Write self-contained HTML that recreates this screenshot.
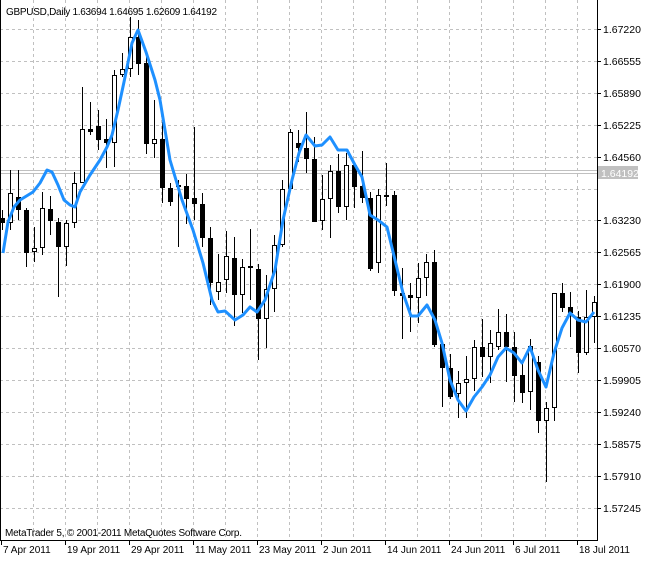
<!DOCTYPE html>
<html><head><meta charset="utf-8"><style>
html,body{margin:0;padding:0;background:#fff;width:650px;height:561px;overflow:hidden}
svg{display:block;font-family:"Liberation Sans",sans-serif;font-size:10.5px}
.s{font-size:10px}
</style></head><body>
<svg width="650" height="561" viewBox="0 0 650 561" xmlns="http://www.w3.org/2000/svg">
<rect width="650" height="561" fill="#fff"/>
<g stroke="#c0c0c0" stroke-width="1" stroke-dasharray="3,3" fill="none">
<path d="M33.5 0V540M65.5 0V540M97.5 0V540M129.5 0V540M161.5 0V540M193.5 0V540M225.5 0V540M257.5 0V540M289.5 0V540M321.5 0V540M353.5 0V540M385.5 0V540M417.5 0V540M449.5 0V540M481.5 0V540M513.5 0V540M545.5 0V540M577.5 0V540"/>
<path d="M0 29.5H597M0 61.5H597M0 93.5H597M0 125.5H597M0 157.5H597M0 189.5H597M0 220.5H597M0 252.5H597M0 284.5H597M0 316.5H597M0 348.5H597M0 380.5H597M0 412.5H597M0 444.5H597M0 476.5H597M0 508.5H597"/>
</g>
<path d="M0 170.5H597M0 173.5H597" stroke="#c0c0c0" stroke-width="1"/>
<path stroke="#000" stroke-width="1" fill="none" d="M2.5 210V230M10.5 170V230M18.5 170V220M26.5 208V267M34.5 227V262M42.5 192V255M50.5 196V235M58.5 218V297M66.5 220V266M74.5 172V228M82.5 87V183M90.5 102V135M98.5 110V150M106.5 119V168M114.5 70V167M122.5 53V77M130.5 17V77M138.5 20V75M146.5 57V154M154.5 100V158M162.5 122V203M170.5 183V206M178.5 180V247M186.5 174V224M194.5 127V220M202.5 193V247M210.5 227V305M218.5 254V300M226.5 231V293M234.5 237V326M242.5 259V313M250.5 229V300M258.5 264V360M266.5 275V348M274.5 235V312M282.5 180V247M290.5 129V190M298.5 130V162M306.5 112V173M314.5 137V222M322.5 175V230M330.5 165V238M338.5 154V213M346.5 153V220M354.5 165V208M362.5 151V203M370.5 192V271M378.5 189V273M386.5 163V206M394.5 191V296M402.5 268V339M410.5 283V332M418.5 263V323M426.5 254V296M434.5 250V347M442.5 344V407M450.5 354V399M458.5 371V418M466.5 356V418M474.5 340V391M482.5 319V377M490.5 330V383M498.5 309V350M506.5 314V382M514.5 332V402M522.5 363V403M530.5 339V410M538.5 356V433M546.5 402V482M554.5 293V421M562.5 283V312M570.5 292V337M578.5 311V373M586.5 290V355M594.5 296V343"/>
<path fill="#000" d="M0 218h5v5h-5zM16 197h5v13h-5zM24 210h5v43h-5zM48 209h5v12h-5zM56 222h5v25h-5zM88 129h5v3h-5zM96 126h5v14h-5zM104 139h5v4h-5zM136 37h5v27h-5zM144 63h5v81h-5zM160 139h5v49h-5zM168 188h5v14h-5zM184 186h5v13h-5zM192 198h5v6h-5zM200 204h5v34h-5zM208 238h5v45h-5zM232 258h5v37h-5zM248 266h5v2h-5zM256 269h5v50h-5zM296 143h5v5h-5zM304 148h5v11h-5zM312 159h5v63h-5zM336 171h5v36h-5zM352 165h5v22h-5zM360 186h5v12h-5zM368 198h5v71h-5zM384 195h5v2h-5zM392 195h5v96h-5zM400 293h5v3h-5zM408 295h5v3h-5zM432 262h5v83h-5zM440 344h5v24h-5zM448 368h5v29h-5zM480 347h5v10h-5zM504 332h5v15h-5zM512 347h5v29h-5zM520 375h5v18h-5zM536 362h5v59h-5zM560 293h5v15h-5zM568 307h5v6h-5zM576 317h5v36h-5z"/>
<path fill="#fff" stroke="#000" stroke-width="1" d="M8.5 193.5h4v29h-4zM32.5 248.5h4v3h-4zM40.5 208.5h4v39h-4zM64.5 223.5h4v23h-4zM72.5 183.5h4v39h-4zM80.5 129.5h4v53h-4zM112.5 75.5h4v67h-4zM120.5 69.5h4v5h-4zM128.5 37.5h4v31h-4zM152.5 139.5h4v4h-4zM176.5 185.5h4v1h-4zM216.5 282.5h4v9h-4zM224.5 256.5h4v23h-4zM240.5 267.5h4v27h-4zM264.5 289.5h4v29h-4zM272.5 245.5h4v43h-4zM280.5 189.5h4v55h-4zM288.5 132.5h4v56h-4zM320.5 199.5h4v21h-4zM328.5 171.5h4v27h-4zM344.5 165.5h4v41h-4zM376.5 195.5h4v67h-4zM416.5 278.5h4v19h-4zM424.5 262.5h4v15h-4zM456.5 383.5h4v10h-4zM464.5 379.5h4v3h-4zM472.5 347.5h4v31h-4zM488.5 343.5h4v13h-4zM496.5 332.5h4v14h-4zM528.5 346.5h4v45h-4zM544.5 408.5h4v12h-4zM552.5 293.5h4v114h-4zM584.5 317.5h4v35h-4zM592.5 302.5h4v14h-4z"/>
<polyline fill="none" stroke="#1e90ff" stroke-width="3" stroke-linejoin="round" points="3,253 8,222 14,207 20,200 33,192 40,183 47,170 52,172 58,185 64,200 70,205 75,207 80,192 90,175 100,160 107,147 112,135 118,110 124,82 132,43 138,30 146,52 155,80 160,100 170,160 182,200 193,230 203,263 212,300 218,312 225,311 235,320 243,315 250,307 257,312 265,300 275,270 283,220 292,180 299,153 306,135 315,146 322,145 330,137 338,150 347,150 355,165 362,177 370,215 378,220 387,227 395,260 403,293 411,316 418,316 427,305 435,320 442,343 450,380 458,400 466,411 474,397 482,387 490,375 498,357 506,348 514,353 522,363 530,347 538,370 546,387 554,353 562,328 570,313 578,320 586,322 594,312"/>
<path d="M0.5 0V540.5H597.5V0" stroke="#000" stroke-width="1" fill="none"/>
<path stroke="#000" stroke-width="1" d="M597 29.5h4M597 61.5h4M597 93.5h4M597 125.5h4M597 157.5h4M597 220.5h4M597 252.5h4M597 284.5h4M597 316.5h4M597 348.5h4M597 380.5h4M597 412.5h4M597 444.5h4M597 476.5h4M597 508.5h4M1.5 540v5M65.5 540v5M129.5 540v5M193.5 540v5M257.5 540v5M321.5 540v5M385.5 540v5M449.5 540v5M513.5 540v5M577.5 540v5"/>
<g fill="#000">
<text x="603" y="33">1.67220</text>
<text x="603" y="65">1.66555</text>
<text x="603" y="97">1.65890</text>
<text x="603" y="129">1.65225</text>
<text x="603" y="161">1.64560</text>
<text x="603" y="224">1.63230</text>
<text x="603" y="256">1.62565</text>
<text x="603" y="288">1.61900</text>
<text x="603" y="320">1.61235</text>
<text x="603" y="352">1.60570</text>
<text x="603" y="384">1.59905</text>
<text x="603" y="416">1.59240</text>
<text x="603" y="448">1.58575</text>
<text x="603" y="480">1.57910</text>
<text x="603" y="512">1.57245</text>
<g class="s">
<text x="3" y="553">7 Apr 2011</text>
<text x="67" y="553">19 Apr 2011</text>
<text x="131" y="553">29 Apr 2011</text>
<text x="195" y="553">11 May 2011</text>
<text x="259" y="553">23 May 2011</text>
<text x="323" y="553">2 Jun 2011</text>
<text x="387" y="553">14 Jun 2011</text>
<text x="451" y="553">24 Jun 2011</text>
<text x="515" y="553">6 Jul 2011</text>
<text x="579" y="553">18 Jul 2011</text>
<text x="6" y="15" textLength="211">GBPUSD,Daily  1.63694 1.64695 1.62609 1.64192</text>
<text x="5" y="536" textLength="237">MetaTrader 5, © 2001-2011 MetaQuotes Software Corp.</text>
</g>
</g>
<rect x="598" y="166" width="40" height="13" fill="#c0c0c0"/>
<text x="601" y="177" fill="#fff">1.64192</text>
</svg>
</body></html>
